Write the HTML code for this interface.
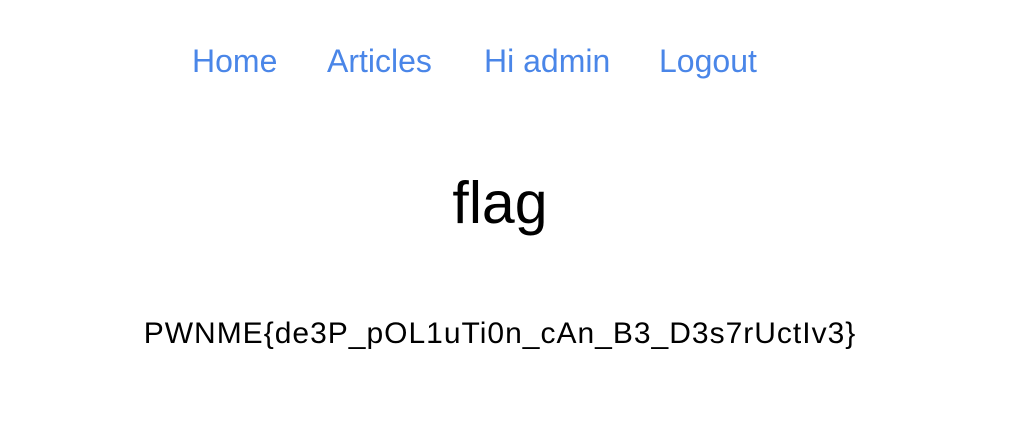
<!DOCTYPE html>
<html><head><meta charset="utf-8"><style>
html,body{margin:0;padding:0;background:#fff;width:1012px;height:438px;overflow:hidden;font-family:"Liberation Sans",Arial,sans-serif;}
.n{position:absolute;top:43px;font-size:32px;color:#4a86e8;line-height:37px;white-space:nowrap;}
.t{position:absolute;left:0;width:1000px;text-align:center;white-space:nowrap;}
</style></head><body>
<span class="n" style="left:192px">Home</span>
<span class="n" style="left:327px">Articles</span>
<span class="n" style="left:484px">Hi admin</span>
<span class="n" style="left:659px">Logout</span>
<div class="t" style="top:170px;font-size:59px;line-height:66px;color:#000">flag</div>
<div class="t" style="top:316px;font-size:30px;line-height:36px;letter-spacing:1px;color:#000">PWNME{de3P_pOL1uTi0n_cAn_B3_D3s7rUctIv3}</div>
</body></html>
